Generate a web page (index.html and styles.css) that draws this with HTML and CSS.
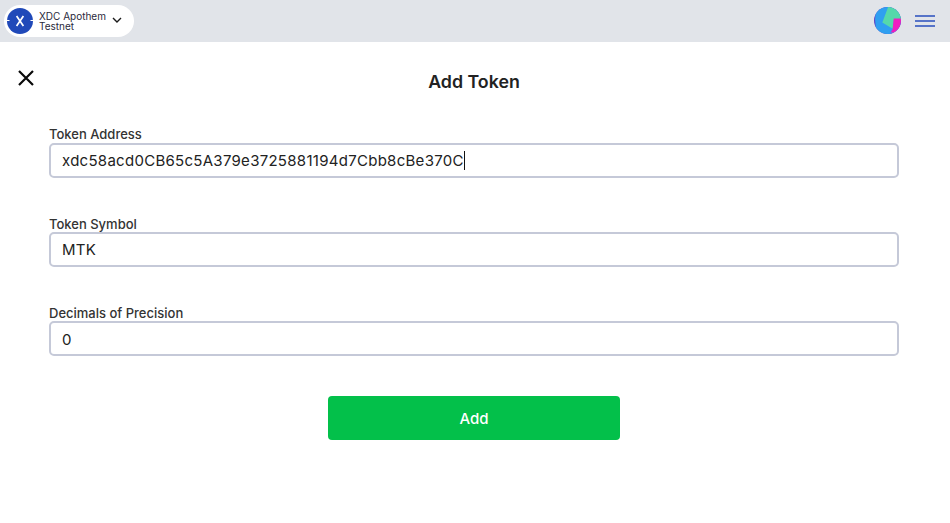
FILE: index.html
```html
<!DOCTYPE html>
<html lang="en">
<head>
<meta charset="utf-8">
<title>Add Token</title>
<link rel="stylesheet" href="styles.css">
</head>
<body>
<header class="topbar">
  <div class="network">
    <svg class="network-logo" width="26" height="26" viewBox="0 0 26 26">
      <circle cx="13" cy="13" r="13" fill="#2049b9"/>
      <path d="M0 12.5h2.5M23.5 12.5H26" stroke="#fff" stroke-width="1"/>
      <path d="M9.6 8l6.8 10M16.4 8l-6.8 10" stroke="#fff" stroke-width="1.7" fill="none"/>
    </svg>
    <div class="network-name">XDC Apothem<br>Testnet</div>
    <svg class="chevron" width="10" height="7" viewBox="0 0 10 7"><path d="M1 1l4 4 4-4" stroke="#1a1a1a" stroke-width="1.4" fill="none"/></svg>
  </div>
  <div class="top-actions">
    <svg class="avatar" width="27" height="27" viewBox="0 0 26 26">
      <defs><clipPath id="disc"><circle cx="13" cy="13" r="13"/></clipPath></defs>
      <g clip-path="url(#disc)">
        <rect width="26" height="26" fill="#5b3fc4"/>
        <path d="M2 -1H27V27H12L2 24 1 12z" fill="#2f9ff0"/>
        <path d="M14 -1H27V13H19L18 21 8 15z" fill="#55d8aa"/>
        <path d="M19 11H27V27H15L18 21z" fill="#f01cc0"/>
        <path d="M10 27L18 27 18 21 18 24z" fill="#2f9ff0"/>
      </g>
    </svg>
    <div class="menu" aria-label="Menu"><span></span><span></span><span></span></div>
  </div>
</header>
<main class="page">
  <div class="title-row">
    <svg class="close" width="18" height="18" viewBox="0 0 18 18"><path d="M2 2l14 14M16 2L2 16" stroke="#0a0a0a" stroke-width="2.2" fill="none"/></svg>
    <h1>Add Token</h1>
  </div>
  <form class="form">
    <div class="field">
      <label>Token Address</label>
      <div class="input"><span>xdc58acd0CB65c5A379e3725881194d7Cbb8cBe370C</span><i class="caret"></i></div>
    </div>
    <div class="field">
      <label>Token Symbol</label>
      <div class="input"><span>MTK</span></div>
    </div>
    <div class="field field-last">
      <label>Decimals of Precision</label>
      <div class="input"><span>0</span></div>
    </div>
    <div class="actions"><div class="add">Add</div></div>
  </form>
</main>
</body>
</html>
```
FILE: styles.css
```css
* { box-sizing: border-box; }
html, body { margin: 0; height: 100%; background: #fff; overflow: hidden; }
body { font-family: Inter, "Liberation Sans", sans-serif; color: #222; }
.topbar { height: 42px; background: #e1e4e9; display: flex; align-items: center; justify-content: space-between; padding: 0 15px 0 4px; }
.network { width: 130px; height: 32px; margin-top: -1px; background: #fff; border-radius: 16px; display: flex; align-items: center; padding-left: 3px; }
.network-logo { flex: none; }
.network-name { font-size: 10px; line-height: 10px; margin-left: 6px; color: #2a2a3c; white-space: nowrap; }
.chevron { margin-left: 6px; flex: none; }
.top-actions { display: flex; align-items: center; gap: 14px; margin-top: -1px; }
.avatar { display: block; }
.menu { width: 20px; display: flex; flex-direction: column; gap: 3px; }
.menu span { display: block; height: 2px; background: #5673c8; }
.title-row { position: relative; height: 40px; padding: 28px 2px 0 0; }
.close { position: absolute; left: 17px; top: 27px; }
h1 { margin: 0; text-align: center; font-size: 17.8px; line-height: 24px; font-weight: 600; color: #222; }
.form { padding: 32px 51px 0 49px; margin-top: 12px; }
.field { height: 89px; }
label { display: block; font-size: 13px; line-height: 16px; font-weight: 500; color: #333; }
.input { height: 35px; margin-top: 1px; border: 2px solid #c5c9d8; border-radius: 5px; padding: 0 11px; display: flex; align-items: center; font-size: 15px; letter-spacing: 0.28px; color: #222; }
.field + .field label { padding-top: 1px; }
.field + .field .input { margin-top: 0; }
.field-last .input { padding-top: 1px; }
.caret { width: 1px; height: 19px; background: #111; }
.actions { display: flex; justify-content: center; margin-top: 3px; }
.add { width: 292px; height: 44px; background: #03c04a; border-radius: 4px; color: #fff; font-size: 15px; font-weight: 500; display: flex; align-items: center; justify-content: center; }
```
